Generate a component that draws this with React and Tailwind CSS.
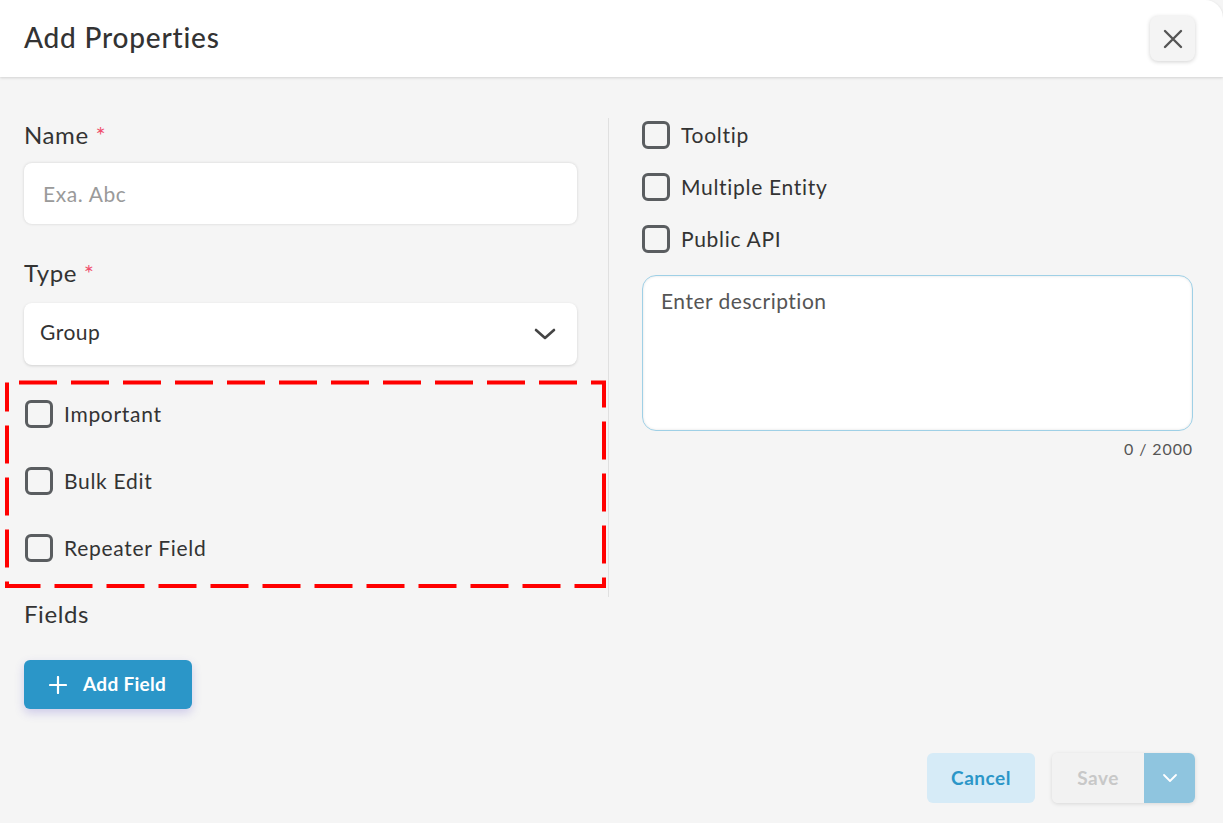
import React from "react";

function Checkbox({ label }) {
  return (
    <div className="flex items-center h-[28px]">
      <div className="w-[28px] h-[28px] rounded-[6px] border-[3px] border-[#5a5d60] bg-transparent shrink-0" />
      <span className="ml-[11px] text-[21px] leading-[28px] tracking-[0.7px] text-[#333]">{label}</span>
    </div>
  );
}

export default function App() {
  return (
    <div
      className="w-[1223px] h-[823px] bg-[#f5f5f5] flex flex-col overflow-hidden relative"
      style={{ fontFamily: "Lato, 'Noto Sans', sans-serif" }}
    >
      {/* Header */}
      <div className="h-[77px] bg-white flex items-center justify-between pl-[24px] pr-[28px] shadow-[0_1px_3px_rgba(0,0,0,0.15)] rounded-tr-[18px] relative z-10">
        <h1 className="text-[28px] font-medium tracking-[0.8px] text-[#333] leading-none -mt-[4px]">Add Properties</h1>
        <button className="w-[45px] h-[45px] rounded-[8px] bg-[#f4f4f4] shadow-[0_1px_4px_rgba(0,0,0,0.18)] flex items-center justify-center">
          <svg width="22" height="22" viewBox="0 0 22 22" fill="none" stroke="#555" strokeWidth="2.4" strokeLinecap="round">
            <path d="M3 3 L19 19 M19 3 L3 19" />
          </svg>
        </button>
      </div>

      {/* Body */}
      <div className="flex-1 flex">
        {/* Left column */}
        <div className="w-[553px] ml-[24px] flex flex-col pt-[43px]">
          <div className="text-[24px] leading-[30px] tracking-[0.6px] text-[#333]">
            Name <span className="text-[#f0506e]">*</span>
          </div>
          <div className="mt-[13px] h-[61px] bg-white rounded-[8px] shadow-[0_0_3px_rgba(0,0,0,0.15)] flex items-center pl-[19px]">
            <span className="text-[21px] tracking-[0.6px] text-[#9a9a9a]">Exa. Abc</span>
          </div>
          <div className="mt-[34px] text-[24px] leading-[30px] tracking-[0.6px] text-[#333]">
            Type <span className="text-[#f0506e]">*</span>
          </div>
          <div className="mt-[15px] h-[62px] bg-white rounded-[8px] shadow-[0_1px_3px_rgba(0,0,0,0.15)] flex items-center justify-between pl-[16px] pr-[21px]">
            <span className="text-[21px] tracking-[0.5px] text-[#333] -mt-[4px]">Group</span>
            <svg width="22" height="14" viewBox="0 0 22 14" fill="none" stroke="#444" strokeWidth="2.6" strokeLinecap="round" strokeLinejoin="round">
              <path d="M2 3 L11 11 L20 3" />
            </svg>
          </div>
          <div className="mt-[35px] flex flex-col gap-[39px] ml-[1px]">
            <Checkbox label="Important" />
            <Checkbox label="Bulk Edit" />
            <Checkbox label="Repeater Field" />
          </div>
          <div className="mt-[37px] text-[24px] leading-[30px] tracking-[0.6px] text-[#333]">Fields</div>
          <button className="mt-[31px] w-[168px] h-[49px] bg-[#2b96c8] rounded-[6px] shadow-[0_4px_10px_rgba(90,80,200,0.25)] flex items-center pl-[25px]">
            <svg width="18" height="18" viewBox="0 0 18 18" fill="none" stroke="white" strokeWidth="2.2" strokeLinecap="round">
              <path d="M9 1 V17 M1 9 H17" />
            </svg>
            <span className="ml-[16px] text-[19px] font-bold tracking-[0.3px] text-white">Add Field</span>
          </button>
        </div>

        {/* Divider */}
        <div className="ml-[31px] mt-[41px] w-[1px] h-[479px] bg-[#e0e0e0]" />

        {/* Right column */}
        <div className="ml-[33px] w-[551px] flex flex-col pt-[44px]">
          <div className="flex flex-col gap-[24px]">
            <Checkbox label="Tooltip" />
            <Checkbox label="Multiple Entity" />
            <Checkbox label="Public API" />
          </div>
          <div className="mt-[22px] h-[156px] bg-white rounded-[14px] border border-[#9fd0e6] shadow-[inset_0_0_3px_rgba(0,0,0,0.12)] pl-[18px] pt-[9px]">
            <span className="text-[21px] tracking-[0.5px] text-[#555]">Enter description</span>
          </div>
          <div className="mt-[9px] text-right text-[16px] leading-[18px] tracking-[0.9px] text-[#555]">0 / 2000</div>
        </div>
      </div>

      {/* Footer */}
      <div className="flex justify-end items-center pr-[28px] pb-[20px]">
        <button className="w-[108px] h-[50px] rounded-[6px] bg-[#d6ebf7] text-[19px] font-bold tracking-[0.5px] text-[#2b96c8]">Cancel</button>
        <div className="ml-[17px] flex h-[50px] rounded-[6px] overflow-hidden shadow-[0_1px_4px_rgba(0,0,0,0.12)]">
          <button className="w-[92px] h-full bg-[#f2f2f2] text-[19px] font-bold tracking-[0.5px] text-[#c8c8c8]">Save</button>
          <button className="w-[51px] h-full bg-[#8fc5df] flex items-center justify-center">
            <svg width="16" height="10" viewBox="0 0 16 10" fill="none" stroke="white" strokeWidth="1.8" strokeLinecap="round" strokeLinejoin="round">
              <path d="M2 2 L8 8 L14 2" />
            </svg>
          </button>
        </div>
      </div>

      {/* Red dashed annotation */}
      <svg className="absolute left-0 top-0 pointer-events-none" width="1223" height="823">
        <rect x="7" y="382.5" width="597" height="203.5" fill="none" stroke="#ff0000" strokeWidth="4" strokeDasharray="38 14" strokeDashoffset="-12" />
      </svg>
    </div>
  );
}
